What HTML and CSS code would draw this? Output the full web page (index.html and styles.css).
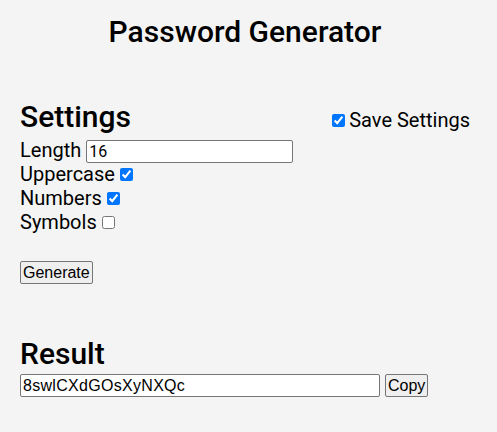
FILE: index.html
```html
<!DOCTYPE html>
<html>
<head>
<meta charset="utf-8">
<link rel="stylesheet" href="styles.css">
</head>
<body>
<div class="app">
  <h1 class="title">Password Generator</h1>
  <div class="settings-head">
    <h2 class="heading">Settings</h2>
    <label class="save"><input type="checkbox" checked>Save Settings</label>
  </div>
  <div class="rows">
    <div class="row"><label>Length</label><input class="len" type="text" value="16"></div>
    <div class="row"><label>Uppercase</label><input type="checkbox" checked></div>
    <div class="row"><label>Numbers</label><input type="checkbox" checked></div>
    <div class="row"><label>Symbols</label><input type="checkbox"></div>
  </div>
  <div class="actions"><button class="btn">Generate</button></div>
  <h2 class="heading result-heading">Result</h2>
  <div class="result-row"><input class="result" type="text" value="8swlCXdGOsXyNXQc"><button class="btn">Copy</button></div>
</div>
</body>
</html>
```
FILE: styles.css
```css
html, body {
  margin: 0;
  padding: 0;
  background: #f4f4f4;
}
body {
  font-family: Roboto, "Liberation Sans", sans-serif;
  color: #000;
  font-size: 20px;
}
.app {
  width: 450px;
  margin: 0 0 0 20px;
}
.title {
  font-size: 30px;
  font-weight: 500;
  text-align: center;
  margin: 14px 0 0;
  line-height: 35px;
}
.settings-head {
  display: flex;
  justify-content: space-between;
  align-items: flex-end;
  margin-top: 50px;
}
.heading {
  font-size: 30px;
  font-weight: 500;
  margin: 0;
  line-height: 35px;
}
.save {
  display: flex;
  align-items: center;
  line-height: 24px;
  margin-bottom: 2px;
}
.save input {
  margin: 0 4px 0 0;
  width: 13px;
  height: 13px;
}
.rows {
  margin-top: 4px;
}
.row {
  display: flex;
  align-items: center;
  gap: 5px;
  height: 24px;
  line-height: 24px;
}
.row input[type=checkbox] {
  margin: 0;
  width: 13px;
  height: 13px;
}
.len {
  width: 207px;
  height: 23px;
  box-sizing: border-box;
  font-family: Roboto, sans-serif;
  font-size: 16px;
  padding: 1px 2px;
  border: 1px solid #767676;
  border-radius: 2px;
  background: #fff;
  margin: 2px 0 0;
}
.actions {
  margin-top: 27px;
  display: flex;
}
.btn {
  font-family: "Liberation Sans", Arial, sans-serif;
  font-size: 16px;
  padding: 1px 2px;
  height: 23px;
  box-sizing: border-box;
  border: 1px solid #767676;
  border-radius: 2px;
  background: #efefef;
  color: #000;
  margin: 0;
}
.result-heading {
  margin-top: 52px;
}
.result-row {
  display: flex;
  align-items: center;
  gap: 5px;
  margin-top: 3px;
}
.result {
  width: 360px;
  height: 23px;
  box-sizing: border-box;
  font-family: "Liberation Sans", Arial, sans-serif;
  font-size: 16px;
  letter-spacing: 0.3px;
  padding: 1px 2px;
  border: 1px solid #767676;
  border-radius: 2px;
  background: #fff;
  margin: 0;
}
```
